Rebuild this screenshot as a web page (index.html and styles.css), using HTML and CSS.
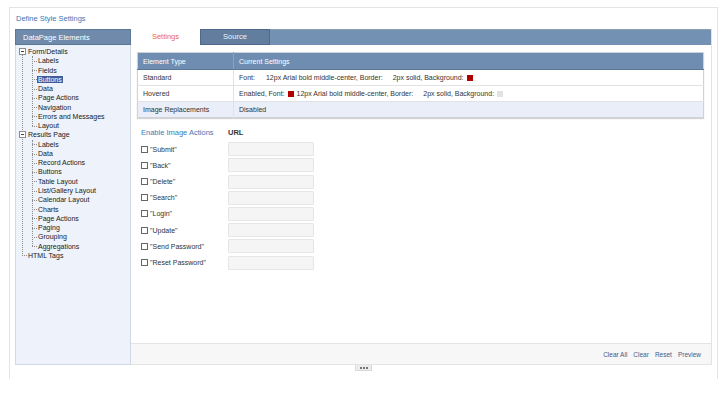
FILE: index.html
```html
<!DOCTYPE html>
<html lang="en">
<head>
    <meta charset="UTF-8">
    <title>Define Style Settings</title>
    <link rel="stylesheet" href="styles.css">
</head>
<body>
    <div class="frame">
        <div class="title">Define Style Settings</div>

        <div class="panel">
            <!-- left tree of elements -->
            <div class="sidebar">
                <div class="side-head">DataPage Elements</div>
                <ul class="tree">
                    <li class="root"><span class="toggle"></span>Form/Details
                        <ul class="branch">
                            <li>Labels</li>
                            <li>Fields</li>
                            <li><span class="sel">Buttons</span></li>
                            <li>Data</li>
                            <li>Page Actions</li>
                            <li>Navigation</li>
                            <li>Errors and Messages</li>
                            <li>Layout</li>
                        </ul>
                    </li>
                    <li class="root"><span class="toggle"></span>Results Page
                        <ul class="branch">
                            <li>Labels</li>
                            <li>Data</li>
                            <li>Record Actions</li>
                            <li>Buttons</li>
                            <li>Table Layout</li>
                            <li>List/Gallery Layout</li>
                            <li>Calendar Layout</li>
                            <li>Charts</li>
                            <li>Page Actions</li>
                            <li>Paging</li>
                            <li>Grouping</li>
                            <li>Aggregations</li>
                        </ul>
                    </li>
                    <li class="root leaf">HTML Tags</li>
                </ul>
            </div>

            <div class="main">
                <div class="tabbar">
                    <div class="tab active">Settings</div>
                    <div class="tab">Source</div>
                </div>

                <div class="content">
                    <table class="settings">
                        <thead>
                            <tr><th class="c1">Element Type</th><th>Current Settings</th></tr>
                        </thead>
                        <tbody>
                            <tr>
                                <td class="c1">Standard</td>
                                <td><span>Font:</span><span class="g1">12px Arial bold middle-center, Border:</span><span class="g2">2px solid, Background:</span><i class="sw red"></i></td>
                            </tr>
                            <tr>
                                <td class="c1">Hovered</td>
                                <td><span>Enabled, Font:</span><i class="sw red"></i><span>12px Arial bold middle-center, Border:</span><span class="g2">2px solid, Background:</span><i class="sw grey"></i></td>
                            </tr>
                            <tr class="alt">
                                <td class="c1">Image Replacements</td>
                                <td>Disabled</td>
                            </tr>
                        </tbody>
                    </table>

                    <div class="actions">
                        <div class="act-head">Enable Image Actions</div>
                        <div class="url-head">URL</div>

                        <label class="chk"><span class="box"></span>"Submit"</label><span class="url"></span>
                        <label class="chk"><span class="box"></span>"Back"</label><span class="url"></span>
                        <label class="chk"><span class="box"></span>"Delete"</label><span class="url"></span>
                        <label class="chk"><span class="box"></span>"Search"</label><span class="url"></span>
                        <label class="chk"><span class="box"></span>"Login"</label><span class="url"></span>
                        <label class="chk"><span class="box"></span>"Update"</label><span class="url"></span>
                        <label class="chk"><span class="box"></span>"Send Password"</label><span class="url"></span>
                        <label class="chk"><span class="box"></span>"Reset Password"</label><span class="url"></span>
                    </div>
                </div>

                <div class="footer">
                    <a>Clear All</a>
                    <a>Clear</a>
                    <a>Reset</a>
                    <a>Preview</a>
                </div>
            </div>
        </div>

        <div class="handle"><i></i><i></i><i></i></div>
    </div>
</body>
</html>
```

FILE: styles.css
```css
body {
    margin: 0;
    font-family: "Liberation Sans", Arial, sans-serif;
    background-color: #fff;
    color: #222;
}
.frame {
    box-sizing: border-box;
    width: 709px;
    height: 372px;
    margin: 7px 0 0 9px;
    padding: 0 5px;
    border: 1px solid #e4e4e4;
    border-bottom: none;
}
.title {
    height: 21px;
    line-height: 21px;
    padding-left: 1px;
    font-size: 7.5px;
    color: #3a7ab8;
}
.panel {
    display: flex;
    width: 697px;
    height: 336px;
}

/* sidebar tree */
.sidebar {
    box-sizing: border-box;
    width: 116px;
    background-color: #edf2fb;
    border: 1px solid #d3d9e3;
    border-top: none;
}
.side-head {
    height: 16px;
    line-height: 16px;
    margin: 0 -1px;
    padding-left: 7px;
    background-color: #6f8aab;
    border: 1px solid #5d7797;
    box-sizing: border-box;
    color: #fff;
    font-size: 7.5px;
}
.tree {
    list-style: none;
    margin: 0;
    padding: 2px 0 0 0;
    position: relative;
    font-size: 7px;
    line-height: 9.27px;
    color: #1a1a1a;
}
.tree::before {
    content: "";
    position: absolute;
    left: 6px;
    top: 9px;
    bottom: 4.6px;
    border-left: 1px dotted #8c8c8c;
}
.tree > li {
    position: relative;
    padding-left: 12px;
}
.toggle {
    position: absolute;
    left: 3px;
    top: 1px;
    width: 7px;
    height: 7px;
    box-sizing: border-box;
    border: 1px solid #8c8c8c;
    background-color: #fff;
    z-index: 1;
}
.toggle::after {
    content: "";
    position: absolute;
    left: 1px;
    top: 2px;
    width: 3px;
    border-top: 1px solid #444;
}
.tree > li.leaf::before {
    content: "";
    position: absolute;
    left: 6px;
    top: 4.6px;
    width: 5px;
    border-top: 1px dotted #8c8c8c;
}
.branch {
    list-style: none;
    margin: 0;
    padding-left: 10px;
    position: relative;
}
.branch::before {
    content: "";
    position: absolute;
    left: 4px;
    top: 0;
    bottom: 4.6px;
    border-left: 1px dotted #8c8c8c;
}
.branch li {
    position: relative;
}
.branch li::before {
    content: "";
    position: absolute;
    left: -6px;
    top: 4.6px;
    width: 5px;
    border-top: 1px dotted #8c8c8c;
}
.sel {
    background-color: #3f5e99;
    color: #fff;
    padding: 0 1px;
    margin-left: -1px;
}

/* right side */
.main {
    flex: 1;
    display: flex;
    flex-direction: column;
    border-right: 1px solid #e3e3e3;
}
.tabbar {
    display: flex;
    height: 16px;
    box-sizing: border-box;
    background-color: #7391b3;
    border-top: 1px solid #8f9fb2;
    border-bottom: 1px solid #7391b3;
}
.tab {
    width: 70px;
    box-sizing: border-box;
    text-align: center;
    font-size: 7.5px;
    line-height: 14px;
    color: #eef2f7;
    background-color: #627d9e;
    border: 1px solid #4e6989;
    margin-top: -1px;
    height: 16px;
}
.tab.active {
    width: 69px;
    background-color: #fff;
    color: #f0643c;
    border: none;
    line-height: 16px;
}
.content {
    flex: 1;
    padding: 7px 7px 0 6px;
    background-color: #fff;
}
.settings {
    width: 100%;
    border-collapse: collapse;
    font-size: 7px;
    color: #333;
    border: 1px solid #cfd3d9;
    box-shadow: 0 1px 1px #d4d4d4;
}
.settings th {
    height: 16px;
    padding: 0 0 0 5px;
    text-align: left;
    font-weight: normal;
    color: #fff;
    background-color: #6f8db1;
    border-bottom: 1px solid #5b7898;
}
.settings th.c1 {
    border-right: 1px solid #8aa3c0;
}
.settings td {
    height: 15px;
    padding: 0 0 0 5px;
    border-top: 1px solid #e2e2e2;
    white-space: nowrap;
}
.settings .c1 {
    width: 90px;
    border-right: 1px solid #e2e2e2;
}
.settings tr.alt td {
    background-color: #e9eef8;
}
.g1 {
    margin-left: 11px;
}
.g2 {
    margin-left: 10px;
}
.sw {
    display: inline-block;
    width: 6px;
    height: 6px;
    margin: 0 3px 0 3px;
    vertical-align: -1px;
}
.sw.red {
    background-color: #b00000;
}
.sw.grey {
    background-color: #e2e2e2;
}

.actions {
    display: grid;
    grid-template-columns: 87px 86px;
    grid-template-rows: 15px repeat(8, 14px);
    row-gap: 2.2px;
    margin: 7px 0 0 4px;
    font-size: 7px;
    color: #333;
}
.act-head {
    font-size: 7.5px;
    color: #3a7ab8;
    line-height: 15px;
}
.url-head {
    font-size: 7.5px;
    font-weight: bold;
    color: #333;
    line-height: 15px;
}
.chk {
    display: flex;
    align-items: center;
}
.box {
    display: inline-block;
    width: 7px;
    height: 7px;
    box-sizing: border-box;
    border: 1px solid #666;
    background-color: #fff;
    margin-right: 2px;
}
.url {
    background-color: #f5f5f5;
    border: 1px solid #e6e6e6;
    border-radius: 1px;
}

.footer {
    height: 20px;
    display: flex;
    justify-content: flex-end;
    align-items: center;
    gap: 6px;
    padding-right: 10px;
    background-color: #f7f7f7;
    border-top: 1px solid #e4e4e4;
    border-bottom: 1px solid #e4e4e4;
    font-size: 6.5px;
}
.footer a {
    color: #3d5a88;
}

.handle {
    width: 17px;
    height: 6px;
    margin: 0 auto;
    box-sizing: border-box;
    background-color: #ececec;
    border: 1px solid #d9d9d9;
    border-top: none;
    display: flex;
    justify-content: center;
    align-items: center;
    gap: 1px;
}
.handle i {
    width: 2px;
    height: 2px;
    background-color: #777;
}
```
